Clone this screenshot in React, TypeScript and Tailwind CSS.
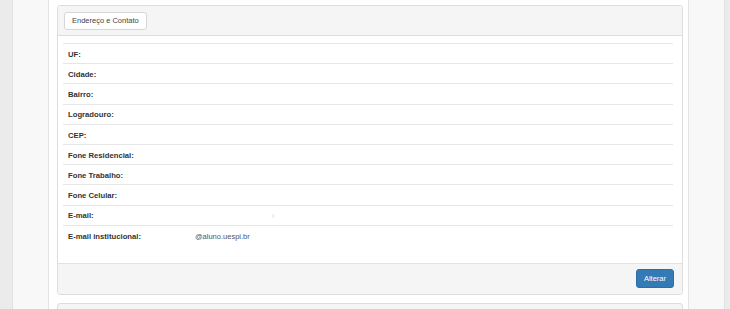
import React from "react";

const rows: { label: string; value?: string; faint?: boolean }[] = [
  { label: "UF:" },
  { label: "Cidade:" },
  { label: "Bairro:" },
  { label: "Logradouro:" },
  { label: "CEP:" },
  { label: "Fone Residencial:" },
  { label: "Fone Trabalho:" },
  { label: "Fone Celular:" },
  { label: "E-mail:", faint: true },
  { label: "E-mail institucional:", value: "@aluno.uespi.br" },
];

const App: React.FC = () => {
  return (
    <div className="flex h-[309px] w-[730px] overflow-hidden bg-[#ebebeb] font-['Liberation_Sans',Arial,sans-serif]">
      <div className="ml-[12px] flex w-[713px] border-x border-[#e2e2e2] bg-[#f8f8f8] px-[35px]">
        <div className="w-full border-x border-[#e4e4e4] bg-white pl-[8px] pr-[5px]">
          {/* Endereço e Contato panel */}
          <div className="mt-[5px] w-[626px] rounded-[3px] border border-[#dddddd]">
            <div className="flex h-[30px] items-center rounded-t-[3px] border-b border-[#dddddd] bg-[#f5f5f5] px-[6px]">
              <button className="flex h-[18px] items-center rounded-[3px] border border-[#d6d6d6] bg-white px-[7px] text-[7.5px] text-[#444]">
                Endereço e Contato
              </button>
            </div>

            <div className="bg-white pb-[18px] pl-[5px] pr-[9px] pt-[7px]">
              {rows.map((row) => (
                <div
                  key={row.label}
                  className="grid h-[20.2px] grid-cols-[127px_1fr] items-center border-t border-[#e6e6e6] pt-[2px]"
                >
                  <span className="pl-[5px] text-[7.7px] font-bold text-[#333]">
                    {row.label}
                  </span>
                  <span className="pl-[5px] text-[7.5px] text-[#555]">
                    {row.value}
                    {row.faint && (
                      <span className="ml-[77px] text-[#d5d5d5]">ı</span>
                    )}
                  </span>
                </div>
              ))}
            </div>

            <div className="flex h-[31px] items-center justify-end rounded-b-[3px] border-t border-[#e3e3e3] bg-[#f5f5f5] pr-[8px]">
              <button className="h-[19px] rounded-[3px] border border-[#2e6da4] bg-[#337ab7] px-[7px] text-[7.5px] text-white">
                Alterar
              </button>
            </div>
          </div>

          {/* next panel, cut off */}
          <div className="mt-[8px] h-[20px] w-[626px] rounded-t-[3px] border border-[#dddddd] bg-[#f5f5f5]" />
        </div>
      </div>
    </div>
  );
};

export default App;
